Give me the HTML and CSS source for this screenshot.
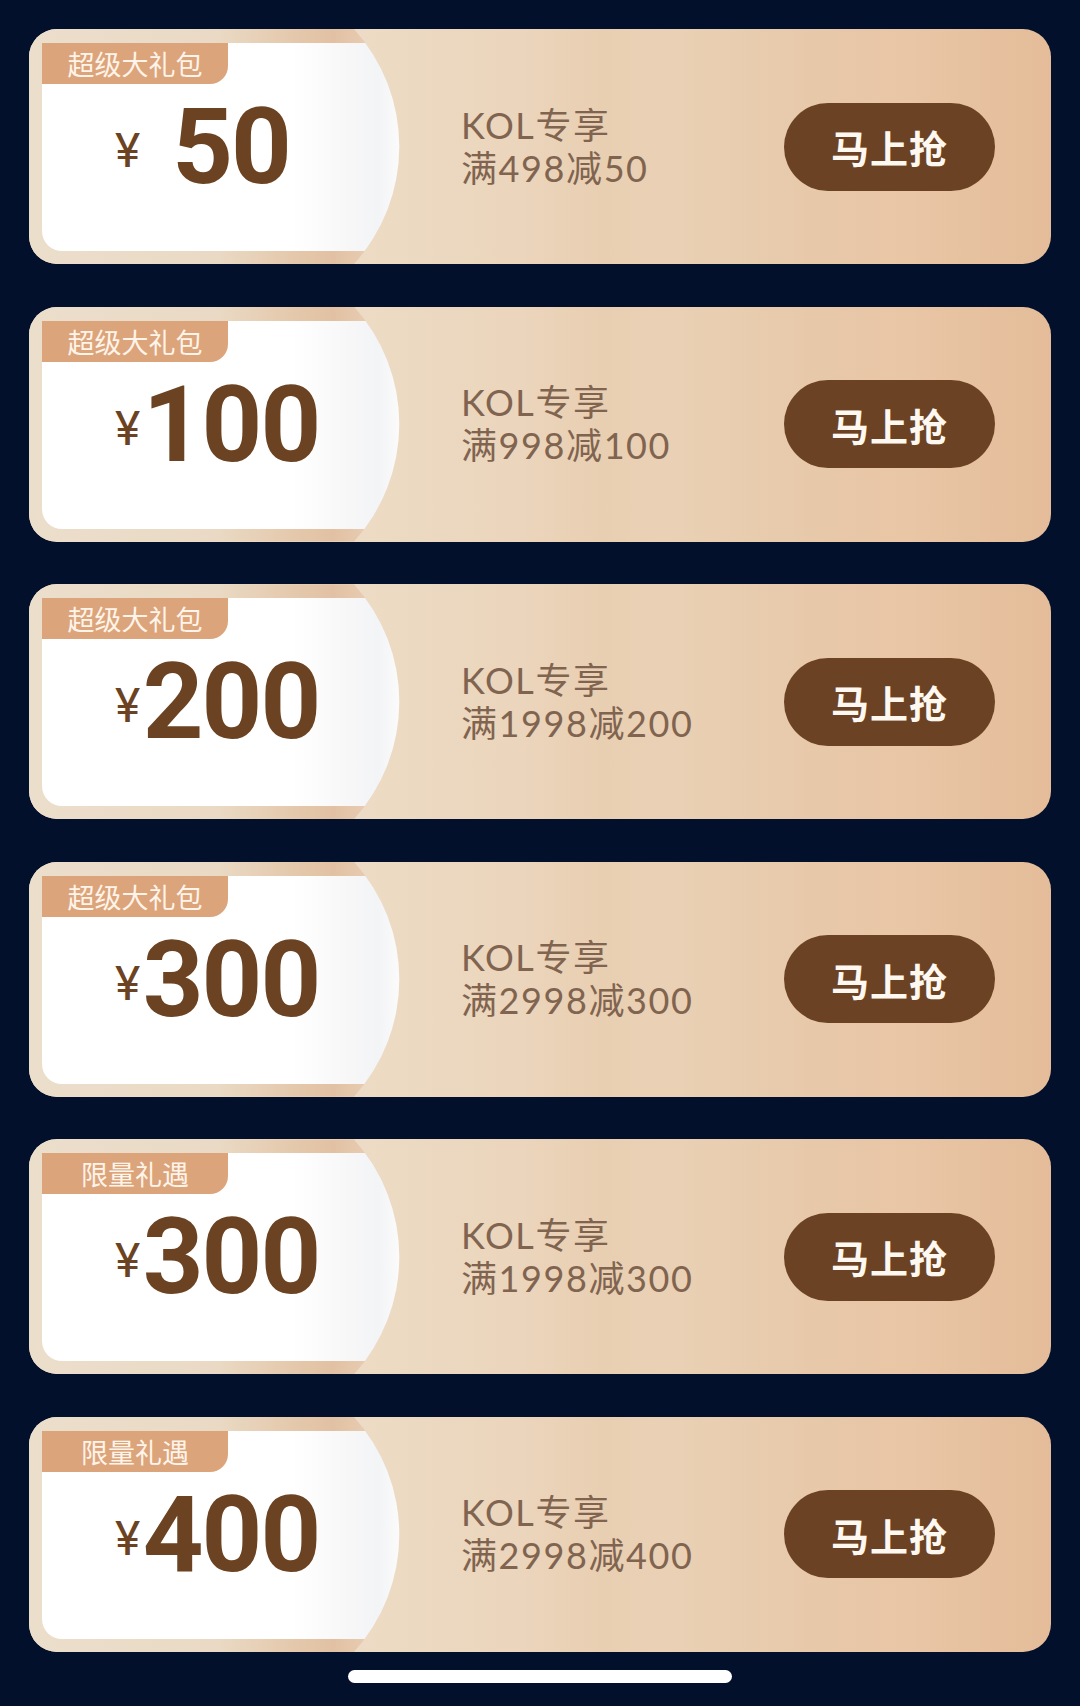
FILE: index.html
```html
<!DOCTYPE html>
<html lang="zh-CN">
<head>
<meta charset="utf-8">
<title>KOL专享</title>
<link rel="stylesheet" href="styles.css">
</head>
<body>
<div class="list">
  <div class="card">
    <div class="stub"><div class="panel"><div class="tag">超级大礼包</div><div class="price"><span class="yen">¥</span><span class="num">50</span></div></div></div>
    <div class="info"><div class="line">KOL专享</div><div class="line">满498减50</div></div>
    <div class="btn">马上抢</div>
  </div>
  <div class="card">
    <div class="stub"><div class="panel"><div class="tag">超级大礼包</div><div class="price"><span class="yen">¥</span><span class="num">100</span></div></div></div>
    <div class="info"><div class="line">KOL专享</div><div class="line">满998减100</div></div>
    <div class="btn">马上抢</div>
  </div>
  <div class="card">
    <div class="stub"><div class="panel"><div class="tag">超级大礼包</div><div class="price"><span class="yen">¥</span><span class="num">200</span></div></div></div>
    <div class="info"><div class="line">KOL专享</div><div class="line">满1998减200</div></div>
    <div class="btn">马上抢</div>
  </div>
  <div class="card">
    <div class="stub"><div class="panel"><div class="tag">超级大礼包</div><div class="price"><span class="yen">¥</span><span class="num">300</span></div></div></div>
    <div class="info"><div class="line">KOL专享</div><div class="line">满2998减300</div></div>
    <div class="btn">马上抢</div>
  </div>
  <div class="card">
    <div class="stub"><div class="panel"><div class="tag">限量礼遇</div><div class="price"><span class="yen">¥</span><span class="num">300</span></div></div></div>
    <div class="info"><div class="line">KOL专享</div><div class="line">满1998减300</div></div>
    <div class="btn">马上抢</div>
  </div>
  <div class="card">
    <div class="stub"><div class="panel"><div class="tag">限量礼遇</div><div class="price"><span class="yen">¥</span><span class="num">400</span></div></div></div>
    <div class="info"><div class="line">KOL专享</div><div class="line">满2998减400</div></div>
    <div class="btn">马上抢</div>
  </div>
  <div class="home"></div>
</div>
</body>
</html>
```
FILE: styles.css
```css
html, body {
  margin: 0;
  padding: 0;
  background: #03102b;
}
body {
  width: 1080px;
  height: 1706px;
  overflow: hidden;
  font-family: "Noto Sans CJK SC", sans-serif;
}
.list {
  display: flex;
  flex-direction: column;
  align-items: center;
  gap: 42.6px;
  padding-top: 29px;
}
.card {
  width: 1022px;
  height: 235px;
  flex: none;
  display: flex;
  align-items: center;
  border-radius: 28px;
  overflow: hidden;
  background: linear-gradient(90deg, #eee0cc 0%, #eddcc6 30%, #ebd5bc 48%, #e9cfb2 56%, #ead1b5 62%, #e7c8a9 78%, #e9c6a6 86%, #e4bc99 100%);
}
.stub {
  width: 371px;
  height: 235px;
  flex: none;
  box-sizing: border-box;
  padding: 14px 0 13px 13px;
  clip-path: path('M0 0 H325 A175 175 0 0 1 325 235 H0 Z');
  background: linear-gradient(90deg, #ebdecb 0%, #eadac5 50%, #e4c8ab 72%, #e2c1a3 82%, #edd6bf 100%);
}
.panel {
  position: relative;
  height: 100%;
  border-radius: 0 0 0 20px;
  background: linear-gradient(90deg, #ffffff 0%, #ffffff 70%, #f7f7f8 86%, #f3f4f6 94%, #fbfbfb 100%);
}
.tag {
  position: absolute;
  top: 0;
  left: 0;
  width: 186px;
  height: 41px;
  line-height: 41px;
  text-align: center;
  background: #dca47a;
  color: #fff4ea;
  font-size: 27px;
  border-radius: 0 0 18px 0;
}
.price {
  height: 100%;
  display: flex;
  align-items: center;
  padding-left: 73px;
  color: #6b4322;
}
.yen {
  width: 24px;
  flex: none;
  font-family: Roboto, "Noto Sans", sans-serif;
  font-weight: 400;
  font-size: 48px;
  line-height: 1;
  padding-top: 8px;
}
.num {
  width: 184px;
  flex: none;
  text-align: center;
  font-family: Roboto, "Noto Sans", sans-serif;
  font-weight: 700;
  font-size: 106px;
  line-height: 1;
  letter-spacing: -2px;
}
.info {
  margin-left: 61px;
  display: flex;
  flex-direction: column;
  color: #806450;
  font-family: Lato, "Noto Sans CJK SC", sans-serif;
  font-size: 36px;
  line-height: 43px;
  letter-spacing: 1.6px;
}
.btn {
  margin-left: auto;
  margin-right: 56px;
  width: 211px;
  height: 88px;
  border-radius: 44px;
  background: #6b4324;
  color: #fff8f0;
  font-size: 38px;
  font-weight: 700;
  display: flex;
  align-items: center;
  justify-content: center;
  letter-spacing: 1px;
}
.home {
  width: 384px;
  height: 13px;
  border-radius: 7px;
  background: #ffffff;
  margin-top: -25px;
}
```
